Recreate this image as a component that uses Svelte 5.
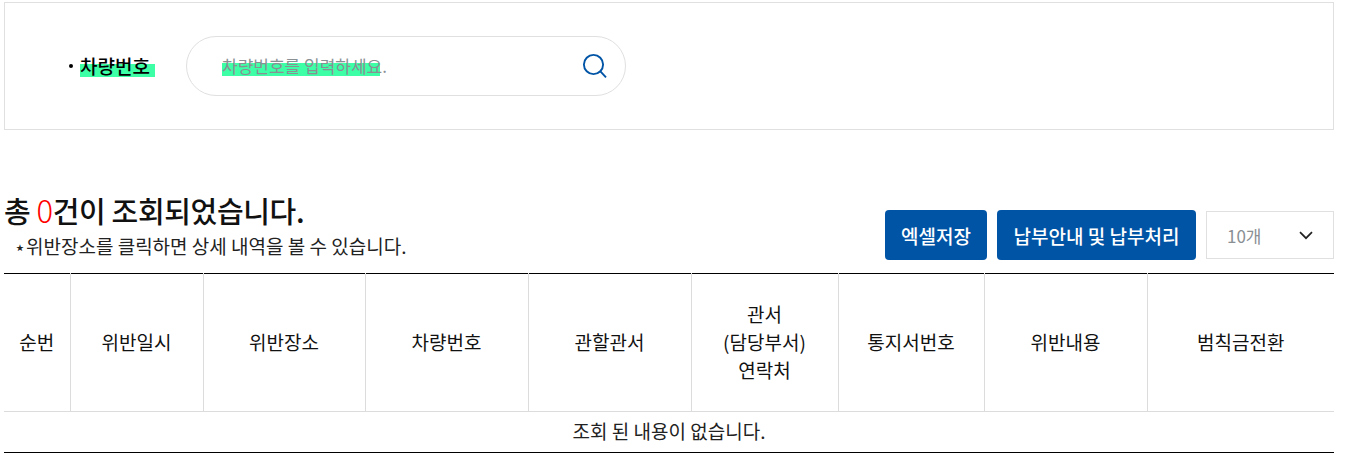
<script lang="ts">
  const columns = [
    { label: ['순번'], width: 66 },
    { label: ['위반일시'], width: 133 },
    { label: ['위반장소'], width: 162 },
    { label: ['차량번호'], width: 163 },
    { label: ['관할관서'], width: 163 },
    { label: ['관서', '(담당부서)', '연락처'], width: 147 },
    { label: ['통지서번호'], width: 146 },
    { label: ['위반내용'], width: 163 },
    { label: ['범칙금전환'], width: 187 }
  ];
</script>

<div class="page">
  <section class="search-box">
    <span class="search-label"><span class="mark">차량번호</span></span>
    <div class="search-field">
      <span class="placeholder"><span class="mark mark--input">차량번호를 입력하세요</span>.</span>
      <button class="search-btn" aria-label="검색">
        <svg width="26" height="26" viewBox="0 0 26 26" fill="none" aria-hidden="true">
          <circle cx="11.5" cy="11.5" r="9.6" stroke="#0054a6" stroke-width="1.9" />
          <path d="M18.4 18.4L24 24.4" stroke="#0054a6" stroke-width="1.9" />
        </svg>
      </button>
    </div>
  </section>

  <div class="result-bar">
    <div class="result-text">
      <h2 class="result-title">총 <em>0</em>건이 조회되었습니다.</h2>
      <p class="result-note">⋆위반장소를 클릭하면 상세 내역을 볼 수 있습니다.</p>
    </div>
    <div class="actions">
      <button class="btn btn--excel">엑셀저장</button>
      <button class="btn btn--pay">납부안내 및 납부처리</button>
      <div class="page-size">
        <span>10개</span>
        <svg width="14" height="9" viewBox="0 0 14 9" fill="none" aria-hidden="true">
          <path d="M1 1.2L7 7.2L13 1.2" stroke="#222" stroke-width="1.7" />
        </svg>
      </div>
    </div>
  </div>

  <table class="result-table">
    <colgroup>
      {#each columns as col}
        <col style="width: {col.width}px" />
      {/each}
    </colgroup>
    <thead>
      <tr>
        {#each columns as col}
          <th>
            {#each col.label as line}
              <div>{line}</div>
            {/each}
          </th>
        {/each}
      </tr>
    </thead>
    <tbody>
      <tr>
        <td colspan={columns.length}>조회 된 내용이 없습니다.</td>
      </tr>
    </tbody>
  </table>
</div>

<style>
  :global(body) {
    margin: 0;
    background: #fff;
    font-family: 'Noto Sans CJK KR', 'Noto Sans', sans-serif;
    color: #111;
  }

  .page {
    width: 1330px;
    padding: 2px 0 0 4px;
  }

  /* ---- Search ---- */
  .search-box {
    box-sizing: border-box;
    height: 128px;
    border: 1px solid #e0e0e0;
    display: flex;
    align-items: center;
    padding-left: 63px;
  }

  .search-label {
    position: relative;
    width: 118px;
    padding-left: 12px;
    box-sizing: border-box;
    font-size: 19px;
    font-weight: 500;
    line-height: 26px;
    color: #000;
  }

  .search-label::before {
    content: '';
    position: absolute;
    left: 1px;
    top: 11px;
    width: 4px;
    height: 4px;
    border-radius: 50%;
    background: #000;
  }

  .mark {
    position: relative;
    z-index: 0;
  }

  .mark::after {
    content: '';
    position: absolute;
    z-index: -1;
    left: 0;
    right: -5px;
    top: 12px;
    height: 13px;
    background: #3dffa6;
  }

  .mark--input::after {
    right: 2px;
    top: 10px;
    height: 13px;
  }

  .search-field {
    box-sizing: border-box;
    width: 440px;
    height: 60px;
    border: 1px solid #e0e0e0;
    border-radius: 30px;
    display: flex;
    align-items: center;
    justify-content: space-between;
    padding: 0 17px 0 35px;
  }

  .placeholder {
    font-size: 17px;
    line-height: 24px;
    color: #8a8f94;
  }

  .search-btn {
    display: flex;
    padding: 0;
    border: 0;
    background: none;
  }

  /* ---- Result bar ---- */
  .result-bar {
    box-sizing: border-box;
    height: 143px;
    display: flex;
    justify-content: space-between;
    align-items: flex-end;
    padding-bottom: 13px;
  }

  .result-text {
    margin-bottom: 1px;
  }

  .result-title {
    margin: 0;
    font-size: 29px;
    font-weight: 500;
    line-height: 46px;
    color: #111;
    letter-spacing: -0.35px;
  }

  .result-title em {
    font-style: normal;
    font-size: 31px;
    line-height: 1;
    font-weight: 300;
    color: #f00;
  }

  .result-note {
    margin: 0;
    padding-left: 10px;
    font-size: 19px;
    line-height: 26px;
    color: #222;
  }

  .actions {
    display: flex;
    align-items: center;
    gap: 10px;
  }

  .btn {
    height: 50px;
    padding: 0;
    border: 0;
    border-radius: 4px;
    background: #0054a6;
    color: #fff;
    font-family: inherit;
    font-size: 19px;
    font-weight: 500;
  }

  .btn--excel {
    width: 102px;
  }

  .btn--pay {
    width: 199px;
  }

  .page-size {
    box-sizing: border-box;
    width: 128px;
    height: 48px;
    border: 1px solid #e0e0e0;
    display: flex;
    align-items: center;
    justify-content: space-between;
    padding: 0 20px;
    font-size: 17px;
    color: #8a8f94;
  }

  /* ---- Table ---- */
  .result-table {
    width: 1330px;
    table-layout: fixed;
    border-collapse: collapse;
    border-top: 1px solid #000;
    border-bottom: 1px solid #000;
  }

  th {
    height: 135px;
    padding: 0 0 2px;
    border-left: 1px solid #dcdcdc;
    border-bottom: 1px solid #dcdcdc;
    font-size: 19px;
    font-weight: 400;
    line-height: 28px;
    color: #111;
  }

  th:first-child {
    border-left: 0;
  }

  td {
    height: 37px;
    padding: 0 0 3px;
    text-align: center;
    font-size: 19px;
    color: #222;
  }
</style>
